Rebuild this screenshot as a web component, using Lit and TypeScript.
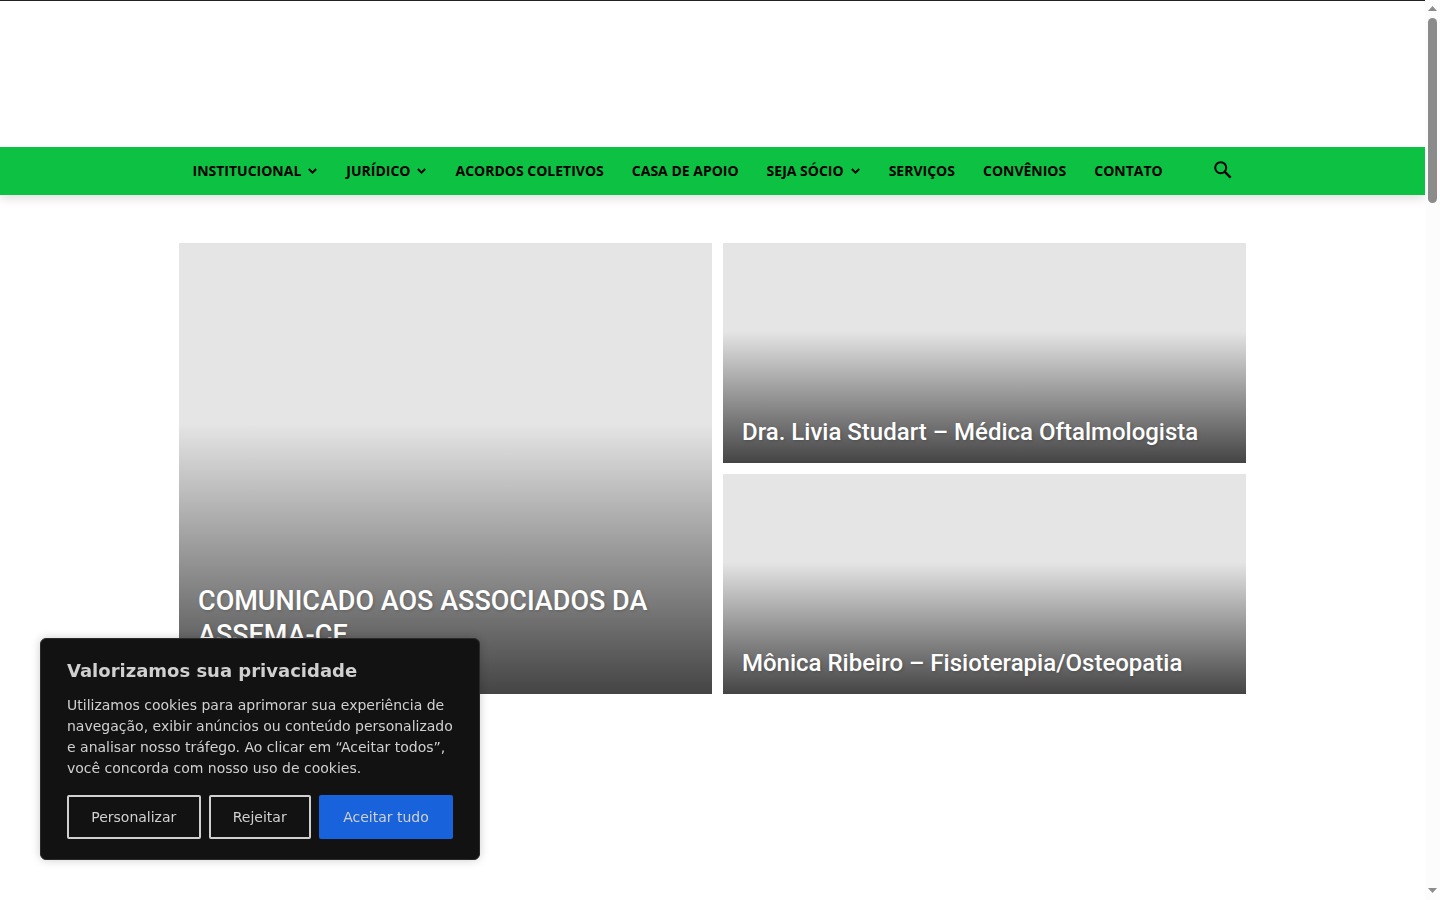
import { LitElement, html, css, svg } from "lit";
import { customElement } from "lit/decorators.js";

interface NavItem {
  label: string;
  menu?: boolean;
}

const NAV: NavItem[] = [
  { label: "INSTITUCIONAL", menu: true },
  { label: "JURÍDICO", menu: true },
  { label: "ACORDOS COLETIVOS" },
  { label: "CASA DE APOIO" },
  { label: "SEJA SÓCIO", menu: true },
  { label: "SERVIÇOS" },
  { label: "CONVÊNIOS" },
  { label: "CONTATO" },
];

const chevron = html`<svg class="chevron" viewBox="0 0 10 6" aria-hidden="true">
  ${svg`<path d="M0.8 1 L4.5 4.6 L8.2 1" fill="none" stroke="currentColor" stroke-width="1.9" />`}
</svg>`;

@customElement("site-header")
export class SiteHeader extends LitElement {
  static styles = css`
    :host {
      display: block;
      font-family: "Open Sans", sans-serif;
    }
    .top {
      border-top: 1px solid #222;
      height: 146px;
    }
    .bar {
      background: #0dc143;
      box-shadow: 0 3px 10px rgba(0, 0, 0, 0.14);
      clip-path: inset(0 0 -16px 0);
    }
    .inner {
      display: flex;
      align-items: center;
      justify-content: space-between;
      max-width: 1068px;
      height: 48px;
      margin: 0 auto;
    }
    .menu {
      display: flex;
      margin: 0;
      padding: 0;
      list-style: none;
    }
    .link {
      display: flex;
      align-items: center;
      padding: 0 14px;
      color: #000;
      font-size: 14px;
      font-weight: 700;
      line-height: 48px;
      white-space: nowrap;
      text-decoration: none;
    }
    .chevron {
      width: 10px;
      height: 6px;
      margin-left: 7px;
    }
    .search {
      display: flex;
      align-items: center;
      justify-content: center;
      width: 48px;
      height: 48px;
      padding: 0 0 2px;
      border: 0;
      background: none;
      color: #000;
    }
    .glass {
      width: 18px;
      height: 18px;
    }
  `;

  render() {
    return html`
      <header>
        <div class="top"></div>
        <div class="bar">
          <nav class="inner">
            <ul class="menu">
              ${NAV.map(
                (item) => html`<li>
                  <a class="link" href="#">${item.label}${item.menu ? chevron : ""}</a>
                </li>`
              )}
            </ul>
            <button class="search" aria-label="Buscar">
              <svg class="glass" viewBox="0 0 18 18" aria-hidden="true">
                <circle cx="6.7" cy="6.7" r="5.5" fill="none" stroke="currentColor" stroke-width="2" />
                <path d="M10.6 10.6 L16.6 16.6" fill="none" stroke="currentColor" stroke-width="2.4" />
              </svg>
            </button>
          </nav>
        </div>
      </header>
    `;
  }
}

@customElement("news-grid")
export class NewsGrid extends LitElement {
  static styles = css`
    :host {
      display: block;
      font-family: Roboto, sans-serif;
    }
    .grid {
      display: grid;
      grid-template-columns: 533fr 523fr;
      grid-template-rows: 220px 220px;
      gap: 11px;
      max-width: 1067px;
      margin: 48px auto 0;
    }
    .card {
      display: flex;
      align-items: flex-end;
      box-sizing: border-box;
      padding: 0 19px 15px;
      background: linear-gradient(to bottom, rgba(0, 0, 0, 0) 40%, rgba(0, 0, 0, 0.7) 100%) #e5e5e5;
      color: #fff;
      text-decoration: none;
      text-shadow: 1px 1px 3px rgba(0, 0, 0, 0.2);
    }
    .lead {
      grid-row: span 2;
      padding-bottom: 42px;
    }
    .title {
      margin: 0;
      font-size: 24px;
      font-weight: 500;
      line-height: 32px;
    }
    .lead .title {
      font-size: 27px;
      line-height: 34px;
    }
  `;

  render() {
    return html`
      <section class="grid">
        <a class="card lead" href="#"><h3 class="title">COMUNICADO AOS ASSOCIADOS DA ASSEMA-CE</h3></a>
        <a class="card" href="#"><h3 class="title">Dra. Livia Studart – Médica Oftalmologista</h3></a>
        <a class="card" href="#"><h3 class="title">Mônica Ribeiro – Fisioterapia/Osteopatia</h3></a>
      </section>
    `;
  }
}

@customElement("cookie-notice")
export class CookieNotice extends LitElement {
  static styles = css`
    :host {
      position: fixed;
      left: 40px;
      bottom: 40px;
      width: 440px;
      font-family: "DejaVu Sans", sans-serif;
      color: #d0d0d0;
    }
    .box {
      padding: 20px 26px;
      border: 1px solid #2a2a2a;
      border-radius: 6px;
      background: #121212;
      box-shadow: 0 0 10px rgba(0, 0, 0, 0.2);
    }
    .title {
      margin: 0 0 12px;
      font-size: 18px;
      line-height: 24px;
    }
    .text {
      margin: 0 0 16px;
      font-size: 14px;
      line-height: 21px;
    }
    .actions {
      display: flex;
      gap: 8px;
    }
    .button {
      flex: 1 1 auto;
      height: 44px;
      padding: 0 22px;
      border: 2px solid #d0d0d0;
      border-radius: 2px;
      background: transparent;
      color: #d0d0d0;
      font: 14px/24px "DejaVu Sans", sans-serif;
      white-space: nowrap;
    }
    .accept {
      border-color: #1863dc;
      background: #1863dc;
    }
  `;

  render() {
    return html`
      <div class="box" role="dialog" aria-labelledby="title">
        <h2 class="title" id="title">Valorizamos sua privacidade</h2>
        <p class="text">
          Utilizamos cookies para aprimorar sua experiência de navegação, exibir anúncios ou conteúdo
          personalizado e analisar nosso tráfego. Ao clicar em “Aceitar todos”, você concorda com nosso
          uso de cookies.
        </p>
        <div class="actions">
          <button class="button">Personalizar</button>
          <button class="button">Rejeitar</button>
          <button class="button accept">Aceitar tudo</button>
        </div>
      </div>
    `;
  }
}

@customElement("scroll-track")
export class ScrollTrack extends LitElement {
  static styles = css`
    :host {
      display: flex;
      flex-direction: column;
      align-items: center;
      flex: none;
      box-sizing: border-box;
      width: 15px;
      padding: 6px 0 7px;
      background: #fcfcfc;
      color: #8b8b8b;
    }
    .arrow {
      display: block;
      width: 9px;
      height: 5px;
    }
    .lane {
      flex: 1;
      width: 9px;
      padding: 7px 0;
    }
    .thumb {
      height: 185px;
      border-radius: 5px;
      background: currentColor;
    }
  `;

  render() {
    return html`
      <svg class="arrow" viewBox="0 0 9 5"><path d="M0 5 L4.5 0 L9 5 Z" fill="currentColor" /></svg>
      <div class="lane"><div class="thumb"></div></div>
      <svg class="arrow" viewBox="0 0 9 5"><path d="M0 0 L4.5 5 L9 0 Z" fill="currentColor" /></svg>
    `;
  }
}

@customElement("app-root")
export class AppRoot extends LitElement {
  static styles = css`
    :host {
      display: flex;
      height: 100vh;
      background: #fff;
    }
    .page {
      flex: 1;
      min-width: 0;
      overflow: hidden;
    }
  `;

  render() {
    return html`
      <main class="page">
        <site-header></site-header>
        <news-grid></news-grid>
      </main>
      <scroll-track aria-hidden="true"></scroll-track>
      <cookie-notice></cookie-notice>
    `;
  }
}
